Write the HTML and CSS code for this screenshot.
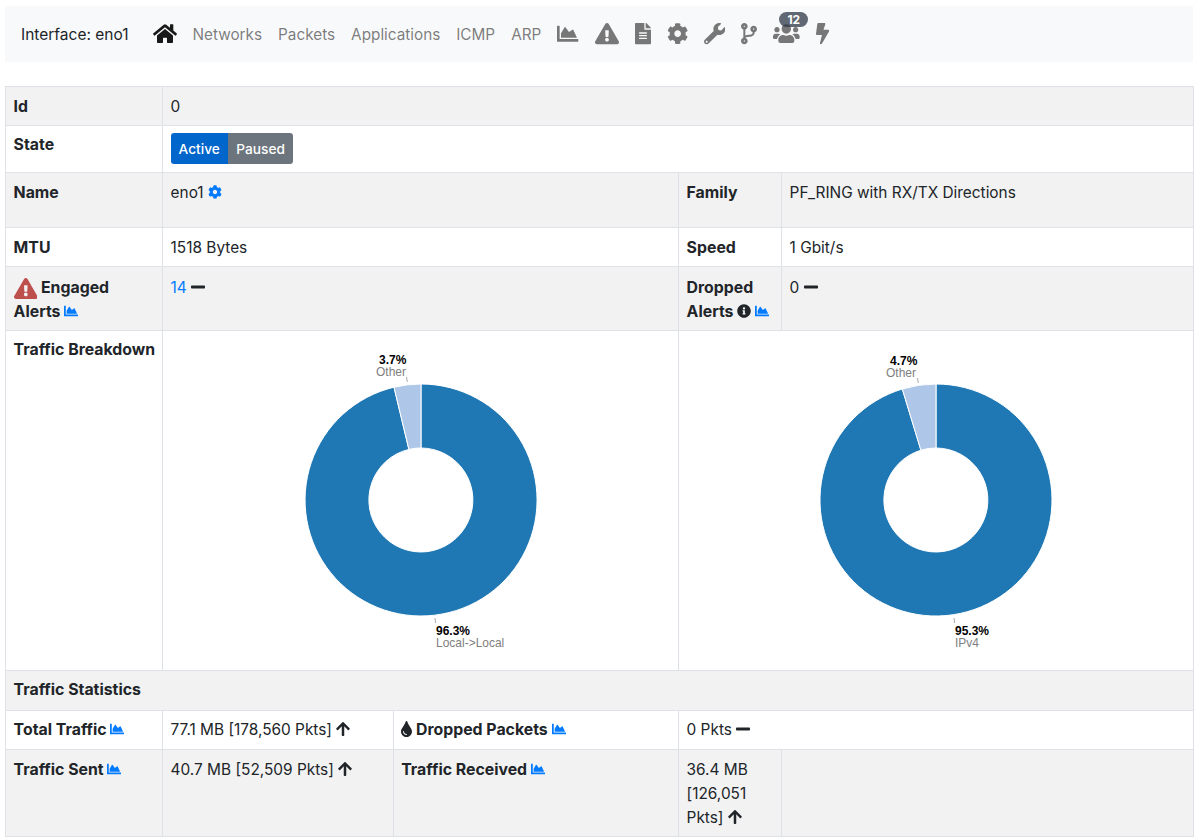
FILE: index.html
```html
<!DOCTYPE html>
<html lang="en">
<head>
    <meta charset="UTF-8">
    <title>Interface: eno1</title>
    <link rel="stylesheet" href="styles.css">
</head>
<body>
    <svg class="defs" width="0" height="0">
        <defs>
            <path id="home" d="M280.37 148.26L96 300.11V464a16 16 0 0 0 16 16l112.06-.29a16 16 0 0 0 15.92-16V368a16 16 0 0 1 16-16h64a16 16 0 0 1 16 16v95.64a16 16 0 0 0 16 16.05L464 480a16 16 0 0 0 16-16V300L295.67 148.26a12.19 12.19 0 0 0-15.3 0zM571.6 251.47L488 182.56V44.05a12 12 0 0 0-12-12h-56a12 12 0 0 0-12 12v72.61L318.47 43a48 48 0 0 0-61 0L4.34 251.47a12 12 0 0 0-1.6 16.9l25.5 31A12 12 0 0 0 45.15 301l235.22-193.74a12.19 12.19 0 0 1 15.3 0L530.9 301a12 12 0 0 0 16.9-1.6l25.5-31a12 12 0 0 0-1.7-16.93z"/>
            <path id="chart" d="M500 384c6.6 0 12 5.4 12 12v40c0 6.6-5.4 12-12 12H12c-6.6 0-12-5.4-12-12V76c0-6.6 5.4-12 12-12h40c6.6 0 12 5.4 12 12v308h436zM372.7 159.5L288 216l-85.3-113.7c-5.1-6.8-15.5-6.3-19.9 1L96 248v104h384l-89.9-187.8c-3.2-6.5-11.4-8.7-17.4-4.7z"/>
            <path id="warn" d="M569.517 440.013C587.975 472.007 564.806 512 527.94 512H48.054c-36.937 0-59.999-40.055-41.577-71.987L246.423 23.985c18.467-32.009 64.72-31.951 83.154 0l239.94 416.028zM288 354c-25.405 0-46 20.595-46 46s20.595 46 46 46 46-20.595 46-46-20.595-46-46-46zm-43.673-165.346l7.418 136c.347 6.364 5.609 11.346 11.982 11.346h48.546c6.373 0 11.635-4.982 11.982-11.346l7.418-136c.375-6.874-5.098-12.654-11.982-12.654h-63.383c-6.884 0-12.356 5.78-11.981 12.654z"/>
            <path id="file" d="M224 136V0H24C10.7 0 0 10.7 0 24v464c0 13.3 10.7 24 24 24h336c13.3 0 24-10.7 24-24V160H248c-13.2 0-24-10.8-24-24zm64 236c0 6.6-5.4 12-12 12H108c-6.6 0-12-5.4-12-12v-8c0-6.6 5.4-12 12-12h168c6.6 0 12 5.4 12 12v8zm0-64c0 6.6-5.4 12-12 12H108c-6.6 0-12-5.4-12-12v-8c0-6.6 5.4-12 12-12h168c6.6 0 12 5.4 12 12v8zm0-72v8c0 6.6-5.4 12-12 12H108c-6.6 0-12-5.4-12-12v-8c0-6.6 5.4-12 12-12h168c6.6 0 12 5.4 12 12zm96-114.1v6.1H256V0h6.1c6.4 0 12.5 2.5 17 7l97.9 98c4.5 4.5 7 10.6 7 16.9z"/>
            <path id="cog" d="M487.4 315.7l-42.6-24.6c4.3-23.2 4.3-47 0-70.2l42.6-24.6c4.9-2.8 7.1-8.6 5.5-14-11.1-35.6-30-67.8-54.7-94.6-3.8-4.1-10-5.1-14.8-2.3L380.8 110c-17.9-15.4-38.5-27.3-60.8-35.1V25.8c0-5.6-3.9-10.5-9.4-11.7-36.7-8.2-74.3-7.8-109.2 0-5.5 1.2-9.4 6.1-9.4 11.7V75c-22.2 7.9-42.8 19.8-60.8 35.1L88.7 85.5c-4.9-2.8-11-1.9-14.8 2.3-24.7 26.7-43.6 58.9-54.7 94.6-1.7 5.4.6 11.2 5.5 14L67.3 221c-4.3 23.2-4.3 47 0 70.2l-42.6 24.6c-4.9 2.8-7.1 8.6-5.5 14 11.1 35.6 30 67.8 54.7 94.6 3.8 4.1 10 5.1 14.8 2.3l42.6-24.6c17.9 15.4 38.5 27.3 60.8 35.1v49.2c0 5.6 3.9 10.5 9.4 11.7 36.7 8.2 74.3 7.8 109.2 0 5.5-1.2 9.4-6.1 9.4-11.7v-49.2c22.2-7.9 42.8-19.8 60.8-35.1l42.6 24.6c4.9 2.8 11 1.9 14.8-2.3 24.7-26.7 43.6-58.9 54.7-94.6 1.5-5.5-.7-11.3-5.6-14.1zM256 336c-44.1 0-80-35.9-80-80s35.9-80 80-80 80 35.9 80 80-35.9 80-80 80z"/>
            <path id="wrench" d="M507.73 109.1c-2.24-9.03-13.54-12.09-20.12-5.51l-74.36 74.36-67.88-11.31-11.31-67.88 74.36-74.36c6.62-6.62 3.43-17.9-5.66-20.16-47.38-11.74-99.55.91-136.58 37.93-39.64 39.64-50.55 97.1-34.05 147.2L18.74 402.76c-24.99 24.99-24.99 65.51 0 90.5 24.99 24.99 65.51 24.99 90.5 0l213.21-213.21c50.12 16.71 107.47 5.68 147.37-34.22 37.07-37.07 49.7-89.32 37.91-136.73zM64 472c-13.25 0-24-10.75-24-24 0-13.26 10.75-24 24-24s24 10.74 24 24c0 13.25-10.75 24-24 24z"/>
            <path id="branch" d="M384 144c0-44.2-35.8-80-80-80s-80 35.8-80 80c0 36.4 24.3 67.1 57.5 76.8-.6 16.1-4.2 28.5-11 36.9-15.4 19.2-49.3 22.4-85.2 25.7-28.2 2.6-57.4 5.4-81.3 16.9v-144c32.5-10.2 56-40.5 56-76.3 0-44.2-35.8-80-80-80S0 35.8 0 80c0 35.8 23.5 66.1 56 76.3v199.3C23.5 365.9 0 396.2 0 432c0 44.2 35.8 80 80 80s80-35.8 80-80c0-34-21.2-63.1-51.2-74.6 3.1-5.2 7.8-9.8 14.9-13.4 16.2-8.2 40.4-10.4 66.1-12.8 42.2-3.9 90-8.4 118.2-43.4 14-17.4 21.1-39.8 21.6-67.9 31.6-10.8 54.4-40.7 54.4-75.9zM80 64c8.8 0 16 7.2 16 16s-7.2 16-16 16-16-7.2-16-16 7.2-16 16-16zm0 384c-8.8 0-16-7.2-16-16s7.2-16 16-16 16 7.2 16 16-7.2 16-16 16zm224-320c8.8 0 16 7.2 16 16s-7.2 16-16 16-16-7.2-16-16 7.2-16 16-16z"/>
            <path id="users" d="M96 224c35.3 0 64-28.7 64-64s-28.7-64-64-64-64 28.7-64 64 28.7 64 64 64zm448 0c35.3 0 64-28.7 64-64s-28.7-64-64-64-64 28.7-64 64 28.7 64 64 64zm32 32h-64c-17.6 0-33.5 7.1-45.1 18.6 40.3 22.1 68.9 62 75.1 109.4h66c17.7 0 32-14.3 32-32v-32c0-35.3-28.7-64-64-64zm-256 0c61.9 0 112-50.1 112-112S381.9 32 320 32 208 82.1 208 144s50.1 112 112 112zm76.8 32h-8.3c-20.8 10-43.9 16-68.5 16s-47.6-6-68.5-16h-8.3C179.6 288 128 339.6 128 403.2V432c0 26.5 21.5 48 48 48h288c26.5 0 48-21.5 48-48v-28.8c0-63.6-51.6-115.2-115.2-115.2zm-223.7-13.4C161.5 263.1 145.6 256 128 256H64c-35.3 0-64 28.7-64 64v32c0 17.7 14.3 32 32 32h65.9c6.3-47.4 34.9-87.3 75.2-109.4z"/>
            <path id="bolt" d="M296 160H180.6l42.6-129.8C227.2 15 215.7 0 200 0H56C44 0 33.8 8.9 32.2 20.8l-32 240C-1.7 275.2 9.5 288 24 288h118.7L96.6 482.5c-3.6 15.2 8 29.5 23.3 29.5 8.4 0 16.4-4.4 20.8-12l176-304c9.3-15.9-2.2-36-20.7-36z"/>
            <path id="minus" d="M416 208H32c-17.67 0-32 14.33-32 32v32c0 17.67 14.33 32 32 32h384c17.67 0 32-14.33 32-32v-32c0-17.67-14.33-32-32-32z"/>
            <path id="up" d="M34.9 289.5l-22.2-22.2c-9.4-9.4-9.4-24.6 0-33.9L207 39c9.4-9.4 24.6-9.4 33.9 0l194.3 194.3c9.4 9.4 9.4 24.6 0 33.9L413 289.4c-9.5 9.5-25 9.3-34.3-.4L264 168.6V456c0 13.3-10.7 24-24 24h-32c-13.3 0-24-10.7-24-24V168.6L69.2 289.1c-9.3 9.8-24.8 10-34.3.4z"/>
            <path id="tint" d="M205.22 22.09c-7.94-28.78-49.44-30.12-58.44 0C100.01 179.85 0 222.72 0 333.91 0 432.35 78.72 512 176 512s176-79.65 176-178.09c0-111.75-99.79-153.34-146.78-311.82zM176 448c-61.75 0-112-50.25-112-112 0-8.84 7.16-16 16-16s16 7.16 16 16c0 44.11 35.89 80 80 80 8.84 0 16 7.16 16 16s-7.16 16-16 16z"/>
            <path id="info" d="M256 8C119.043 8 8 119.083 8 256c0 136.997 111.043 248 248 248s248-111.003 248-248C504 119.083 392.957 8 256 8zm0 110c23.196 0 42 18.804 42 42s-18.804 42-42 42-42-18.804-42-42 18.804-42 42-42zm56 254c0 6.627-5.373 12-12 12h-88c-6.627 0-12-5.373-12-12v-24c0-6.627 5.373-12 12-12h12v-64h-12c-6.627 0-12-5.373-12-12v-24c0-6.627 5.373-12 12-12h64c6.627 0 12 5.373 12 12v100h12c6.627 0 12 5.373 12 12v24z"/>
        </defs>
    </svg>

    <nav class="navbar">
        <span class="brand">Interface: eno1</span>
        <a class="nav-link active"><svg class="fa" viewBox="0 0 576 512"><use href="#home"/></svg></a>
        <a class="nav-link nav-text">Networks</a>
        <a class="nav-link nav-text">Packets</a>
        <a class="nav-link nav-text">Applications</a>
        <a class="nav-link nav-text">ICMP</a>
        <a class="nav-link nav-text">ARP</a>
        <a class="nav-link"><svg class="fa" viewBox="0 0 512 512"><use href="#chart"/></svg></a>
        <a class="nav-link"><svg class="fa" viewBox="0 0 576 512"><use href="#warn"/></svg></a>
        <a class="nav-link"><svg class="fa" viewBox="0 0 384 512"><use href="#file"/></svg></a>
        <a class="nav-link"><svg class="fa" viewBox="0 0 512 512"><use href="#cog"/></svg></a>
        <a class="nav-link"><svg class="fa" viewBox="0 0 512 512"><use href="#wrench"/></svg></a>
        <a class="nav-link"><svg class="fa" viewBox="0 0 384 512"><use href="#branch"/></svg></a>
        <a class="nav-link users-link">
            <svg class="fa" viewBox="0 0 640 512"><use href="#users"/></svg>
            <span class="badge">12</span>
        </a>
        <a class="nav-link"><svg class="fa" viewBox="0 0 320 512"><use href="#bolt"/></svg></a>
    </nav>

    <table class="stats">
        <colgroup>
            <col class="col-a"><col class="col-b"><col class="col-c"><col class="col-d"><col class="col-e">
        </colgroup>
        <tr class="odd">
            <th>Id</th>
            <td colspan="4">0</td>
        </tr>
        <tr class="state-row">
            <th>State</th>
            <td colspan="4">
                <div class="btn-group"><span class="btn btn-active">Active</span><span class="btn btn-paused">Paused</span></div>
            </td>
        </tr>
        <tr class="odd name-row">
            <th>Name</th>
            <td colspan="2">eno1 <svg class="fa-sm link" viewBox="0 0 512 512"><use href="#cog"/></svg></td>
            <th>Family</th>
            <td>PF_RING with RX/TX Directions</td>
        </tr>
        <tr>
            <th>MTU</th>
            <td colspan="2">1518 Bytes</td>
            <th>Speed</th>
            <td>1 Gbit/s</td>
        </tr>
        <tr class="odd alerts-row">
            <th><svg class="alert-icon" viewBox="0 0 576 512"><use href="#warn"/></svg> Engaged Alerts <svg class="fa-sm link" viewBox="0 0 512 512"><use href="#chart"/></svg></th>
            <td colspan="2"><a class="link">14</a> <svg class="fa-md" viewBox="0 0 448 512"><use href="#minus"/></svg></td>
            <th>Dropped Alerts <svg class="fa-sm" viewBox="0 0 512 512"><use href="#info"/></svg> <svg class="fa-sm link" viewBox="0 0 512 512"><use href="#chart"/></svg></th>
            <td>0 <svg class="fa-md" viewBox="0 0 448 512"><use href="#minus"/></svg></td>
        </tr>
        <tr class="chart-row">
            <th>Traffic Breakdown</th>
            <td colspan="2" class="chart-cell">
                <svg class="pie" viewBox="0 0 515 339">
                    <path class="slice-a" d="M258 53A116 116 0 1 1 231 56.2L245.9 118.4A52 52 0 1 0 258 117Z"/>
                    <path class="slice-b" d="M258 53V117A52 52 0 0 0 245.9 118.4L231 56.2A116 116 0 0 1 258 53Z"/>
                    <line class="tick" x1="243.5" y1="46" x2="244.3" y2="51"/>
                    <text class="pct" x="216" y="33">3.7%</text>
                    <text class="lbl" x="213" y="45">Other</text>
                    <line class="tick" x1="272" y1="287" x2="272.6" y2="292"/>
                    <text class="pct" x="273" y="304">96.3%</text>
                    <text class="lbl" x="273" y="316">Local-&gt;Local</text>
                </svg>
            </td>
            <td colspan="2" class="chart-cell">
                <svg class="pie" viewBox="0 0 514 339">
                    <path class="slice-a" d="M257 53A116 116 0 1 1 223.3 58L241.9 119.2A52 52 0 1 0 257 117Z"/>
                    <path class="slice-b" d="M257 53V117A52 52 0 0 0 241.9 119.2L223.3 58A116 116 0 0 1 257 53Z"/>
                    <line class="tick" x1="238.5" y1="47" x2="239.3" y2="52"/>
                    <text class="pct" x="211" y="34">4.7%</text>
                    <text class="lbl" x="207" y="46">Other</text>
                    <line class="tick" x1="275" y1="287" x2="275.6" y2="292"/>
                    <text class="pct" x="276" y="304">95.3%</text>
                    <text class="lbl" x="276" y="316">IPv4</text>
                </svg>
            </td>
        </tr>
        <tr class="odd section-row">
            <th colspan="5">Traffic Statistics</th>
        </tr>
        <tr>
            <th>Total Traffic <svg class="fa-sm link" viewBox="0 0 512 512"><use href="#chart"/></svg></th>
            <td>77.1 MB [178,560 Pkts] <svg class="fa-md" viewBox="0 0 448 512"><use href="#up"/></svg></td>
            <th><svg class="fa-md" viewBox="0 0 352 512"><use href="#tint"/></svg> Dropped Packets <svg class="fa-sm link" viewBox="0 0 512 512"><use href="#chart"/></svg></th>
            <td colspan="2">0 Pkts <svg class="fa-md" viewBox="0 0 448 512"><use href="#minus"/></svg></td>
        </tr>
        <tr class="odd">
            <th>Traffic Sent <svg class="fa-sm link" viewBox="0 0 512 512"><use href="#chart"/></svg></th>
            <td>40.7 MB [52,509 Pkts] <svg class="fa-md" viewBox="0 0 448 512"><use href="#up"/></svg></td>
            <th>Traffic Received <svg class="fa-sm link" viewBox="0 0 512 512"><use href="#chart"/></svg></th>
            <td>36.4 MB [126,051 Pkts] <svg class="fa-md" viewBox="0 0 448 512"><use href="#up"/></svg></td>
            <td></td>
        </tr>
    </table>
</body>
</html>
```

FILE: styles.css
```css
body {
    font-family: Inter, 'Liberation Sans', sans-serif;
    font-size: 16px;
    line-height: 24px;
    margin: 0;
    padding: 6px 8px 0 5px;
    background-color: white;
    color: #212529;
}
.defs {
    position: absolute;
}
.navbar {
    display: flex;
    align-items: center;
    height: 56px;
    padding: 0 16px;
    margin-bottom: 24px;
    background-color: #f8f9fa;
}
.brand {
    margin-right: 16px;
    padding-top: 2px;
    font-size: 15.5px;
}
.nav-link {
    position: relative;
    display: flex;
    align-items: center;
    padding: 0 8px;
    color: rgba(0,0,0,0.52);
    font-size: 15.3px;
}
.nav-text {
    padding-top: 2px;
}
.nav-link.active {
    color: rgba(0,0,0,0.9);
}
.fa {
    height: 21.33px;
    fill: currentColor;
}
.badge {
    position: absolute;
    top: -11px;
    left: 14px;
    width: 29px;
    height: 15px;
    border-radius: 8px;
    background-color: rgba(45,55,70,0.75);
    color: white;
    font-size: 12px;
    font-weight: 700;
    line-height: 15px;
    text-align: center;
}
.stats {
    width: 1188px;
    table-layout: fixed;
    border-collapse: collapse;
}
.col-a { width: 157px; }
.col-b { width: 230.6px; }
.col-c { width: 285.4px; }
.col-d { width: 103px; }
.col-e { width: 412px; }
.stats th,
.stats td {
    border: 1px solid #dee2e6;
    text-align: left;
    vertical-align: top;
}
.stats th {
    padding: 7.8px 4px 6.6px 7.6px;
    font-size: 15.85px;
    font-weight: 700;
}
.stats td {
    padding: 7.8px 8px 6.6px 7.6px;
    font-size: 15.4px;
}
.stats .state-row th {
    padding-top: 7px;
    padding-bottom: 7.4px;
}
.stats .alerts-row th,
.stats .alerts-row td {
    padding-top: 8.4px;
    padding-bottom: 6px;
}
.odd {
    background-color: #f2f2f2;
}
.name-row {
    height: 55px;
}
.chart-row {
    height: 340px;
}
.section-row {
    height: 40px;
}
.stats .chart-cell {
    padding: 0;
}
.pie {
    display: block;
    width: 100%;
}
.slice-a {
    fill: #1f77b4;
    stroke: white;
}
.slice-b {
    fill: #aec7e8;
    stroke: white;
}
.tick {
    stroke: #aaa;
    stroke-width: 1;
}
.pie text {
    font-family: 'Liberation Sans', sans-serif;
    font-size: 12px;
}
.pct {
    font-weight: 700;
    fill: black;
}
.lbl {
    fill: #808080;
}
.btn-group {
    display: flex;
    margin: -1.4px 0 1.4px;
}
.btn {
    padding: 5px 8px 3px;
    color: white;
    font-size: 13.7px;
    font-weight: 500;
    line-height: 23px;
}
.btn-active {
    background-color: #0066cc;
    border-radius: 3px 0 0 3px;
}
.btn-paused {
    padding-right: 8.5px;
    padding-left: 8.5px;
    background-color: #6c757d;
    border-radius: 0 3px 3px 0;
}
.link {
    color: #007bff;
}
.fa-sm {
    height: 14px;
    fill: currentColor;
    vertical-align: -1px;
}
.fa-md {
    height: 16px;
    fill: currentColor;
    vertical-align: -2px;
}
.alert-icon {
    height: 21px;
    margin: -3px 0;
    fill: #bd4f4c;
    vertical-align: -3px;
}
```
